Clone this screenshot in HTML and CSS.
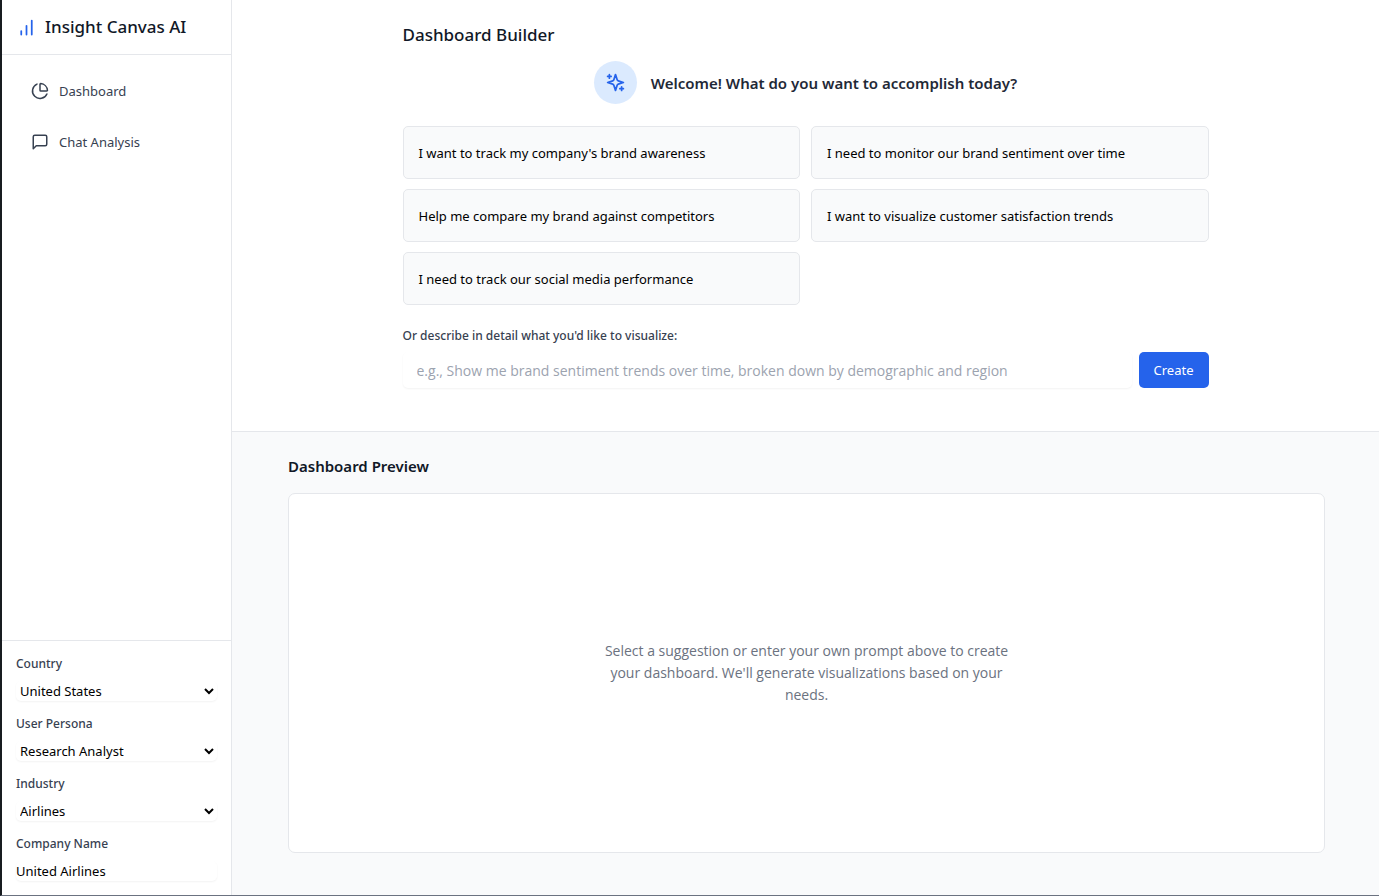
FILE: index.html
```
<!DOCTYPE html>
<html lang="en">
<head>
<meta charset="utf-8">
<meta name="viewport" content="width=device-width, initial-scale=1">
<title>Insight Canvas AI</title>
<link rel="stylesheet" href="styles.css">
</head>
<body>
<div class="app">
  <aside class="sidebar">
    <header class="brand">
      <svg class="brand-icon" viewBox="0 0 24 24" aria-hidden="true"><path d="M6 20v-4M12 20V10M18 20V4"/></svg>
      <h1 class="brand-name">Insight Canvas AI</h1>
    </header>
    <nav class="nav">
      <a class="nav-link" href="#dashboard">
        <svg class="nav-icon" viewBox="0 0 24 24" aria-hidden="true"><path d="M21 12c.55 0 1-.45.95-1A10 10 0 0 0 13 2.05c-.55-.05-1 .4-1 .95v8a1 1 0 0 0 1 1z"/><path d="M21.21 15.89A10 10 0 1 1 8 2.83"/></svg>
        Dashboard
      </a>
      <a class="nav-link" href="#chat">
        <svg class="nav-icon" viewBox="0 0 24 24" aria-hidden="true"><path d="M21 15a2 2 0 0 1-2 2H7l-4 4V5a2 2 0 0 1 2-2h14a2 2 0 0 1 2 2z"/></svg>
        Chat Analysis
      </a>
    </nav>
    <form class="settings">
      <div class="field">
        <label class="label" for="country">Country</label>
        <select class="control" id="country"><option>United States</option></select>
      </div>
      <div class="field">
        <label class="label" for="persona">User Persona</label>
        <select class="control" id="persona"><option>Research Analyst</option></select>
      </div>
      <div class="field">
        <label class="label" for="industry">Industry</label>
        <select class="control" id="industry"><option>Airlines</option></select>
      </div>
      <div class="field">
        <label class="label" for="company">Company Name</label>
        <input class="control" id="company" type="text" value="United Airlines">
      </div>
    </form>
  </aside>
  <main class="main">
    <section class="builder">
      <div class="builder-inner">
        <h2 class="builder-title">Dashboard Builder</h2>
        <div class="welcome">
          <span class="welcome-badge">
            <svg class="welcome-icon" viewBox="0 0 24 24" aria-hidden="true"><path d="m12 3-1.9 5.8a2 2 0 0 1-1.287 1.288L3 12l5.8 1.9a2 2 0 0 1 1.288 1.287L12 21l1.9-5.8a2 2 0 0 1 1.287-1.288L21 12l-5.8-1.9a2 2 0 0 1-1.288-1.287Z"/><path d="M5 3v4M19 17v4M3 5h4M17 19h4"/></svg>
          </span>
          <p class="welcome-text">Welcome! What do you want to accomplish today?</p>
        </div>
        <div class="suggestions">
          <button class="suggestion" type="button">I want to track my company's brand awareness</button>
          <button class="suggestion" type="button">I need to monitor our brand sentiment over time</button>
          <button class="suggestion" type="button">Help me compare my brand against competitors</button>
          <button class="suggestion" type="button">I want to visualize customer satisfaction trends</button>
          <button class="suggestion" type="button">I need to track our social media performance</button>
        </div>
        <form class="prompt">
          <label class="label" for="prompt">Or describe in detail what you'd like to visualize:</label>
          <div class="prompt-row">
            <input class="prompt-input" id="prompt" type="text" placeholder="e.g., Show me brand sentiment trends over time, broken down by demographic and region">
            <button class="create" type="button">Create</button>
          </div>
        </form>
      </div>
    </section>
    <section class="preview">
      <div class="preview-inner">
        <h2 class="preview-title">Dashboard Preview</h2>
        <div class="preview-card">
          <p class="preview-text">Select a suggestion or enter your own prompt above to create your dashboard. We'll generate visualizations based on your needs.</p>
        </div>
      </div>
    </section>
  </main>
</div>
</body>
</html>
```
FILE: styles.css
```
* { box-sizing: border-box; margin: 0; }

body {
  font-family: "Noto Sans", "Open Sans", sans-serif;
  font-size: 13px;
  color: #111827;
  background: #fff;
}

button, input, select { font: inherit; color: inherit; }

.app {
  display: flex;
  min-height: 100vh;
  border-left: 2px solid #181c20;
  border-bottom: 1px solid #6b7280;
}

.sidebar {
  flex: none;
  width: 230px;
  display: flex;
  flex-direction: column;
  border-right: 1px solid #e5e7eb;
}

.brand {
  display: flex;
  align-items: center;
  gap: 8px;
  height: 55px;
  padding: 0 14px;
  border-bottom: 1px solid #e5e7eb;
}

.brand-icon, .nav-icon, .welcome-icon {
  flex: none;
  fill: none;
  stroke: currentColor;
  stroke-width: 2;
  stroke-linecap: round;
  stroke-linejoin: round;
}

.brand-icon { width: 21px; height: 21px; color: #2563eb; }
.brand-name { font-size: 17px; font-weight: 500; line-height: 24px; }

.nav {
  flex: 1;
  display: flex;
  flex-direction: column;
  gap: 15px;
  padding: 18px 29px;
}

.nav-link {
  display: flex;
  align-items: center;
  gap: 10px;
  height: 36px;
  color: #374151;
  text-decoration: none;
}

.nav-icon { width: 18px; height: 18px; }

.settings {
  display: flex;
  flex-direction: column;
  gap: 14px;
  padding: 14px;
  border-top: 1px solid #e5e7eb;
}

.field { display: flex; flex-direction: column; gap: 8px; }

.label {
  font-size: 12px;
  font-weight: 500;
  line-height: 18px;
  color: #374151;
}

.control {
  width: 100%;
  height: 20px;
  padding: 0;
  border: 0;
  border-radius: 5px;
  background: #fff;
  color: #000;
  box-shadow: 0 1px 2px rgba(0, 0, 0, 0.05);
}

.main {
  flex: 1;
  min-width: 0;
  display: flex;
  flex-direction: column;
}

.builder { padding: 22px 28px 43px; border-bottom: 1px solid #e5e7eb; }
.builder-inner { max-width: 806px; margin: 0 auto; }
.builder-title { font-size: 17px; font-weight: 500; line-height: 25px; }

.welcome {
  display: flex;
  align-items: center;
  justify-content: center;
  gap: 14px;
  margin: 14px 0 22px;
}

.welcome-badge {
  display: grid;
  place-items: center;
  width: 43px;
  height: 43px;
  border-radius: 50%;
  background: #dbeafe;
  color: #2563eb;
}

.welcome-icon { width: 21px; height: 21px; }
.welcome-text { font-size: 15px; font-weight: 600; color: #1f2937; }

.suggestions {
  display: grid;
  grid-template-columns: 1fr 1fr;
  gap: 10px 11px;
}

.suggestion {
  height: 53px;
  padding: 0 15px;
  border: 1px solid #e5e7eb;
  border-radius: 5px;
  background: #f9fafb;
  color: #000;
  text-align: left;
}

.prompt {
  display: flex;
  flex-direction: column;
  gap: 7px;
  margin-top: 22px;
}

.prompt-row { display: flex; gap: 7px; }

.prompt-input {
  flex: 1;
  min-width: 0;
  height: 36px;
  padding: 0 14px;
  border: 0;
  border-radius: 5px;
  background: #fff;
  box-shadow: 0 1px 2px rgba(0, 0, 0, 0.05);
}

.prompt-input, .preview-text {
  font-family: "Open Sans", "Noto Sans", sans-serif;
  font-size: 14px;
}

.prompt-input::placeholder { color: #9ca3af; }

.create {
  width: 70px;
  height: 36px;
  padding: 0;
  border: 0;
  border-radius: 5px;
  background: #2563eb;
  color: #fff;
}

.preview {
  flex: 1;
  display: flex;
  padding: 22px 54px 42px 56px;
  background: #f9fafb;
}

.preview-inner {
  flex: 1;
  display: flex;
  flex-direction: column;
  gap: 14px;
  max-width: 1037px;
  margin: 0 auto;
}

.preview-title { font-size: 15px; font-weight: 600; line-height: 25px; }

.preview-card {
  flex: 1;
  display: grid;
  place-items: center;
  border: 1px solid #e5e7eb;
  border-radius: 7px;
  background: #fff;
}

.preview-text {
  max-width: 412px;
  line-height: 22px;
  text-align: center;
  color: #6b7280;
}
```
